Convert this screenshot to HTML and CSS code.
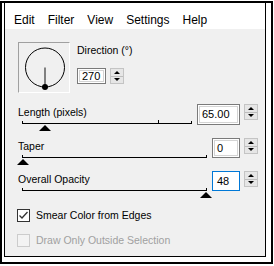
FILE: index.html
```html
<!DOCTYPE html>
<html lang="en">
<head>
    <meta charset="UTF-8">
    <title>Smear</title>
    <link rel="stylesheet" href="styles.css">
</head>
<body>
    <div class="frame">
        <div class="inner">
            <div class="menubar">
                <span>Edit</span>
                <span>Filter</span>
                <span>View</span>
                <span>Settings</span>
                <span>Help</span>
            </div>
            <div class="panel">
                <div class="dir-row">
                    <div class="dial">
                        <svg width="50" height="49" viewBox="0 0 50 49">
                            <circle cx="26" cy="24.5" r="19.5" fill="none" stroke="#000" stroke-width="1"/>
                            <line x1="26" y1="24.5" x2="26" y2="43" stroke="#808080" stroke-width="2"/>
                            <circle cx="26" cy="44" r="3" fill="#000"/>
                        </svg>
                    </div>
                    <div class="dir-fields">
                        <div class="label">Direction (°)</div>
                        <div class="field">
                            <div class="input w-dir">270</div>
                            <div class="spin"><span class="up"></span><span class="down"></span></div>
                        </div>
                    </div>
                </div>

                <div class="slider-row">
                    <div class="slider-col">
                        <div class="label">Length (pixels)</div>
                        <div class="track">
                            <span class="tick" style="left: 135px"></span>
                            <span class="thumb" style="left: 22px"></span>
                        </div>
                    </div>
                    <div class="field">
                        <div class="input w-len">65.00</div>
                        <div class="spin"><span class="up"></span><span class="down"></span></div>
                    </div>
                </div>

                <div class="slider-row">
                    <div class="slider-col">
                        <div class="label">Taper</div>
                        <div class="track">
                            <span class="thumb" style="left: 0px"></span>
                        </div>
                    </div>
                    <div class="field">
                        <div class="input">0</div>
                        <div class="spin"><span class="up"></span><span class="down"></span></div>
                    </div>
                </div>

                <div class="slider-row">
                    <div class="slider-col">
                        <div class="label">Overall Opacity</div>
                        <div class="track">
                            <span class="thumb" style="left: 100%"></span>
                        </div>
                    </div>
                    <div class="field">
                        <div class="input focus">48</div>
                        <div class="spin"><span class="up"></span><span class="down"></span></div>
                    </div>
                </div>

                <div class="check">
                    <span class="box">
                        <svg width="11" height="11" viewBox="0 0 11 11"><path d="M1.5 5.5 L4 8 L9.5 2" fill="none" stroke="#333" stroke-width="1.3"/></svg>
                    </span>
                    Smear Color from Edges
                </div>
                <div class="check disabled">
                    <span class="box"></span>
                    Draw Only Outside Selection
                </div>
            </div>
        </div>
    </div>
</body>
</html>
```

FILE: styles.css
```css
* {
    box-sizing: border-box;
}

body {
    margin: 0;
    padding-top: 1px;
    background-color: #ffffff;
    font-family: "Liberation Sans", Arial, sans-serif;
    font-size: 10.5px;
    color: #000;
}

.frame {
    width: 273px;
    height: 263px;
    border: 2px solid #000;
    padding: 0 5px 5px 2px;
}

.inner {
    height: 100%;
    border: 1px solid #000;
    border-top: none;
    display: flex;
    flex-direction: column;
}

.menubar {
    height: 26px;
    display: flex;
    padding: 10px 0 0 9px;
    font-size: 12px;
    line-height: 14px;
    background-color: #fff;
}

.menubar span {
    margin-right: 13px;
}

.panel {
    flex: 1;
    background-color: #f0f0f0;
    padding: 13px 7px 0 13px;
}

.label {
    line-height: 13px;
}

.dir-row {
    display: flex;
    gap: 7px;
}

.dial {
    width: 52px;
    height: 51px;
    border-top: 1px solid #a0a0a0;
    border-left: 1px solid #a0a0a0;
    border-right: 1px solid #fff;
    border-bottom: 1px solid #fff;
}

.dial svg {
    display: block;
}

.dir-fields {
    padding-top: 2px;
}

.dir-fields .label {
    margin-bottom: 11px;
}

.field {
    display: flex;
    gap: 4px;
    align-items: flex-start;
}

.input {
    width: 28px;
    height: 20px;
    border: 1px solid #7a7a7a;
    box-shadow: inset 0 0 0 1px #fff, inset 0 0 0 2px #d4d4d4;
    background-color: #fff;
    padding: 3px 0 0 4px;
    line-height: 13px;
    font-size: 11px;
}

.w-dir {
    width: 29px;
    height: 16px;
    padding-top: 1px;
}

.w-len {
    width: 43px;
    height: 21px;
}

.input.focus {
    border-color: #0078d7;
    box-shadow: inset 0 0 0 1px #fff;
}

.spin {
    width: 14px;
    height: 16px;
    border: 1px solid #c4c4c4;
    background-color: #e6e6e6;
    display: flex;
    flex-direction: column;
}

.spin span {
    flex: 1;
    display: flex;
    align-items: center;
    justify-content: center;
}

.spin .up {
    border-bottom: 1px solid #bdbdbd;
}

.spin .up::before {
    content: "";
    border-left: 3px solid transparent;
    border-right: 3px solid transparent;
    border-bottom: 3px solid #000;
}

.spin .down::before {
    content: "";
    border-left: 3px solid transparent;
    border-right: 3px solid transparent;
    border-top: 3px solid #000;
}

.slider-row {
    display: flex;
    align-items: flex-start;
    margin-top: 13px;
}

.slider-row + .slider-row {
    margin-top: 15px;
}

.slider-row .field {
    margin-top: -2px;
}

.slider-col {
    flex: 1;
}

.track {
    position: relative;
    margin: 2px 5px 0 4px;
    height: 3px;
    border-left: 1px solid #000;
    border-right: 1px solid #000;
    border-bottom: 1px solid #000;
}

.tick {
    position: absolute;
    bottom: 0;
    width: 1px;
    height: 3px;
    background-color: #000;
}

.thumb {
    position: absolute;
    top: 4px;
    margin-left: -6px;
    width: 0;
    height: 0;
    border-left: 6px solid transparent;
    border-right: 6px solid transparent;
    border-bottom: 6px solid #000;
}

.check {
    display: flex;
    align-items: center;
    gap: 6px;
    margin-top: 18px;
    margin-left: -1px;
    line-height: 13px;
}

.box {
    width: 13px;
    height: 13px;
    border: 1px solid #333;
    background-color: #fff;
    display: flex;
    align-items: center;
    justify-content: center;
}

.check.disabled {
    color: #a0a0a0;
    margin-top: 12px;
}

.check.disabled .box {
    border-color: #cccccc;
    background-color: #f3f3f3;
}
```
